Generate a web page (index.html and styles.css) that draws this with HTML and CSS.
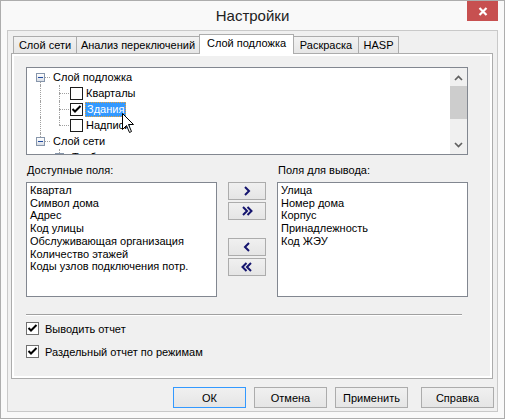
FILE: index.html
```html
<!DOCTYPE html>
<html lang="ru">
<head>
<meta charset="utf-8">
<title>Настройки</title>
<link rel="stylesheet" href="styles.css">
</head>
<body>
<div class="window">
  <div class="titlebar">
    <div class="title">Настройки</div>
    <div class="close">
      <svg width="10" height="9" viewBox="0 0 10 9"><path d="M1.5 1 L8.5 8 M8.5 1 L1.5 8" stroke="#fff" stroke-width="2.2" fill="none"/></svg>
    </div>
  </div>
  <div class="client">
    <div class="tabctl">
      <div class="tabs">
        <div class="tab t1">Слой сети</div>
        <div class="tab t2">Анализ переключений</div>
        <div class="tab t3 active">Слой подложка</div>
        <div class="tab t4">Раскраска</div>
        <div class="tab t5">HASP</div>
      </div>
      <div class="pane">
        <div class="page">
          <div class="tree">
            <div class="tree-items">
              <div class="row">
                <div class="cell"><span class="v-bottom"></span><span class="h"></span><span class="box"><span class="minus"></span></span></div>
                <span class="node-label">Слой подложка</span>
              </div>
              <div class="row">
                <div class="cell"><span class="v-full"></span></div>
                <div class="cell"><span class="v-full"></span><span class="h"></span></div>
                <span class="tcheck"></span>
                <span class="node-label">Кварталы</span>
              </div>
              <div class="row">
                <div class="cell"><span class="v-full"></span></div>
                <div class="cell"><span class="v-full"></span><span class="h"></span></div>
                <span class="tcheck"><svg width="11" height="11" viewBox="0 0 11 11"><path d="M1.5 5 L4 7.5 L9.5 2" stroke="#000" stroke-width="2" fill="none"/></svg></span>
                <span class="node-label selected">Здания</span>
              </div>
              <div class="row">
                <div class="cell"><span class="v-full"></span></div>
                <div class="cell"><span class="v-top"></span><span class="h"></span></div>
                <span class="tcheck"></span>
                <span class="node-label">Надписи</span>
              </div>
              <div class="row">
                <div class="cell"><span class="v-top"></span><span class="h"></span><span class="box"><span class="minus"></span></span></div>
                <span class="node-label">Слой сети</span>
              </div>
              <div class="row">
                <div class="cell"></div>
                <div class="cell"><span class="v-top"></span><span class="h"></span><span class="box"><span class="minus"></span></span></div>
                <span class="node-label">Трубопроводы</span>
              </div>
            </div>
            <div class="vscroll">
              <div class="sbtn up"><svg width="9" height="6" viewBox="0 0 9 6"><path d="M1 5 L4.5 1.5 L8 5" stroke="#606060" stroke-width="1.7" fill="none"/></svg></div>
              <div class="thumb"></div>
              <div class="strack"></div>
              <div class="sbtn down"><svg width="9" height="6" viewBox="0 0 9 6"><path d="M1 1 L4.5 4.5 L8 1" stroke="#606060" stroke-width="1.7" fill="none"/></svg></div>
            </div>
            <svg class="cursor" width="13" height="21" viewBox="0 0 13 21"><path d="M0.5 0.5 L0.5 16.5 L4.5 12.5 L7.5 19.5 L9.5 18.5 L6.5 11.5 L11.5 11.5 Z" fill="#fff" stroke="#000" stroke-width="1"/></svg>
          </div>

          <div class="fields">
            <div class="col">
              <div class="col-label">Доступные поля:</div>
              <div class="list">
                <div>Квартал</div>
                <div>Символ дома</div>
                <div>Адрес</div>
                <div>Код улицы</div>
                <div>Обслуживающая организация</div>
                <div>Количество этажей</div>
                <div>Коды узлов подключения потр.</div>
              </div>
            </div>
            <div class="movebtns">
              <div class="mbtn"><svg width="12" height="10" viewBox="0 0 12 10"><path d="M4 1 L8 5 L4 9" stroke="#14146e" stroke-width="2" fill="none"/></svg></div>
              <div class="mbtn"><svg width="12" height="10" viewBox="0 0 12 10"><path d="M2 1 L6 5 L2 9 M6.5 1 L10.5 5 L6.5 9" stroke="#14146e" stroke-width="2" fill="none"/></svg></div>
              <div class="mbtn gap"><svg width="12" height="10" viewBox="0 0 12 10"><path d="M8 1 L4 5 L8 9" stroke="#14146e" stroke-width="2" fill="none"/></svg></div>
              <div class="mbtn"><svg width="12" height="10" viewBox="0 0 12 10"><path d="M5.5 1 L1.5 5 L5.5 9 M10 1 L6 5 L10 9" stroke="#14146e" stroke-width="2" fill="none"/></svg></div>
            </div>
            <div class="col">
              <div class="col-label">Поля для вывода:</div>
              <div class="list">
                <div>Улица</div>
                <div>Номер дома</div>
                <div>Корпус</div>
                <div>Принадлежность</div>
                <div>Код ЖЭУ</div>
              </div>
            </div>
          </div>

          <div class="sep"></div>

          <div class="check first">
            <span class="cbox"><svg width="11" height="11" viewBox="0 0 11 11"><path d="M1.5 5 L4 7.5 L9.5 2" stroke="#000" stroke-width="2" fill="none"/></svg></span>
            <span class="clabel">Выводить отчет</span>
          </div>
          <div class="check">
            <span class="cbox"><svg width="11" height="11" viewBox="0 0 11 11"><path d="M1.5 5 L4 7.5 L9.5 2" stroke="#000" stroke-width="2" fill="none"/></svg></span>
            <span class="clabel">Раздельный отчет по режимам</span>
          </div>
        </div>
      </div>
    </div>
    <div class="buttons">
      <div class="btn default">ОК</div>
      <div class="btn">Отмена</div>
      <div class="btn">Применить</div>
      <div class="btn help">Справка</div>
    </div>
  </div>
</div>
</body>
</html>
```

FILE: styles.css
```css
* { box-sizing: border-box; }
html, body { margin: 0; padding: 0; }
body {
  width: 505px;
  height: 419px;
  overflow: hidden;
  background: #fff;
  font-family: "Liberation Sans", Arial, sans-serif;
  font-size: 11px;
  color: #000;
}
.window {
  width: 505px;
  height: 419px;
  border: 1px solid #adadad;
  background: #f9f9f9;
  display: flex;
  flex-direction: column;
}
.titlebar {
  height: 29px;
  flex: none;
  display: grid;
  grid-template-columns: 1fr auto 1fr;
  padding: 0 6px;
}
.title {
  grid-column: 2;
  font-size: 15px;
  line-height: 29px;
  color: #222;
}
.close {
  grid-column: 3;
  justify-self: end;
  align-self: start;
  width: 31px;
  height: 20px;
  background: #c75050;
  display: flex;
  align-items: center;
  justify-content: center;
}
.client {
  margin: 0 6px 6px;
  height: 382px;
  border: 1px solid #c9c9c9;
  background: #f0f0f0;
  display: flex;
  flex-direction: column;
}
.tabctl {
  margin: 3px 4px 0 3px;
  width: 482px;
}
.tabs {
  display: flex;
  align-items: flex-end;
  height: 19px;
  padding-left: 2px;
}
.tab {
  height: 17px;
  border: 1px solid #acacac;
  border-bottom: none;
  background: linear-gradient(#f2f2f2, #e6e6e6);
  margin-left: -1px;
  text-align: center;
  line-height: 16px;
  white-space: nowrap;
}
.tab.t1 { margin-left: 0; width: 64px; }
.tab.t2 { width: 124px; }
.tab.t3 { width: 95px; }
.tab.t4 { width: 66px; }
.tab.t5 { width: 41px; }
.tab.active {
  height: 20px;
  background: #fff;
  margin-bottom: -1px;
  position: relative;
  z-index: 1;
  line-height: 17px;
}
.pane {
  height: 326px;
  border: 1px solid #acacac;
  background: #fff;
  padding: 2px;
}
.page {
  height: 100%;
  background: #f0f0f0;
  padding: 11px 0 0 12px;
}

/* tree */
.tree {
  position: relative;
  width: 442px;
  height: 88px;
  border: 1px solid #828790;
  background: #fff;
  display: flex;
}
.tree-items {
  flex: 1;
  padding-top: 1px;
  overflow: hidden;
}
.row {
  height: 16px;
  display: flex;
  align-items: center;
  padding-left: 4px;
  white-space: nowrap;
}
.cell {
  width: 19px;
  height: 16px;
  flex: none;
  position: relative;
}
.v-full, .v-top, .v-bottom {
  position: absolute;
  left: 9px;
  width: 0;
  border-left: 1px dotted #a0a0a0;
}
.v-full { top: 0; bottom: 0; }
.v-top { top: 0; height: 8px; }
.v-bottom { top: 8px; bottom: 0; }
.h {
  position: absolute;
  left: 9px;
  right: 0;
  top: 8px;
  height: 0;
  border-top: 1px dotted #a0a0a0;
}
.box {
  position: absolute;
  left: 5px;
  top: 4px;
  width: 9px;
  height: 9px;
  border: 1px solid #8796ab;
  background: linear-gradient(#ffffff, #d9dee6);
  display: flex;
  align-items: center;
  justify-content: center;
}
.minus {
  width: 5px;
  height: 1px;
  background: #1f4aa0;
}
.tcheck {
  width: 13px;
  height: 13px;
  flex: none;
  margin-left: 1px;
  border: 1px solid #1c1c1c;
  background: #fff;
  display: flex;
  align-items: center;
  justify-content: center;
}
.node-label {
  margin-left: 3px;
  line-height: 14px;
}
.tcheck + .node-label { margin-left: 3px; }
.node-label.selected {
  margin-left: 2px;
  padding: 0 1px;
  background: #3399ff;
  color: #fff;
  border: 1px dotted #e9a23b;
  line-height: 13px;
}
.vscroll {
  width: 17px;
  flex: none;
  background: #f0f0f0;
  display: flex;
  flex-direction: column;
}
.sbtn {
  height: 17px;
  display: flex;
  align-items: center;
  justify-content: center;
}
.sbtn.up { padding-top: 3px; }
.sbtn.down { padding-bottom: 1px; }
.thumb {
  height: 33px;
  margin-top: 1px;
  background: #cdcdcd;
}
.strack { flex: 1; }
.cursor {
  position: absolute;
  left: 95px;
  top: 45px;
  z-index: 2;
}

/* fields */
.fields {
  display: flex;
  margin-top: 9px;
}
.col { width: 191px; flex: none; }
.col-label {
  height: 13px;
  line-height: 13px;
  margin-bottom: 5px;
  padding-left: 1px;
  white-space: nowrap;
}
.list {
  height: 115px;
  border: 1px solid #828790;
  background: #fff;
  padding: 1px 0 0 3px;
  line-height: 12.7px;
  white-space: nowrap;
}
.movebtns {
  width: 38px;
  flex: none;
  margin: 18px 11px 0;
  display: flex;
  flex-direction: column;
}
.mbtn {
  height: 18px;
  border: 1px solid #acacac;
  background: linear-gradient(#f0f0f0, #e5e5e5);
  display: flex;
  align-items: center;
  justify-content: center;
}
.mbtn + .mbtn { margin-top: 2px; }
.mbtn.gap { margin-top: 18px; }

.sep {
  width: 436px;
  height: 2px;
  margin-top: 17px;
  border-top: 1px solid #a0a0a0;
  border-bottom: 1px solid #fff;
}
.check {
  display: flex;
  align-items: center;
  height: 13px;
  margin-top: 10px;
}
.check.first { margin-top: 6px; }
.cbox {
  width: 13px;
  height: 13px;
  flex: none;
  border: 1px solid #707070;
  background: #fff;
  display: flex;
  align-items: center;
  justify-content: center;
}
.clabel {
  margin-left: 6px;
  white-space: nowrap;
}

/* bottom buttons */
.buttons {
  display: flex;
  justify-content: flex-end;
  gap: 8px;
  margin-top: 8px;
  padding-right: 3px;
}
.btn {
  width: 73px;
  height: 21px;
  border: 1px solid #acacac;
  background: linear-gradient(#f0f0f0, #e5e5e5);
  display: flex;
  align-items: center;
  justify-content: center;
}
.btn.default { border-color: #3399ff; }
.btn.help { margin-left: 5px; }
```
